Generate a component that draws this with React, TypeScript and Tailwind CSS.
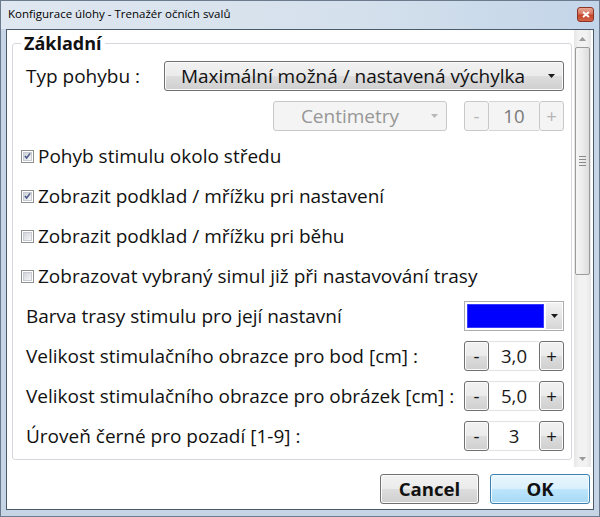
import React from "react";

const btnFace =
  "border border-[#707070] rounded-[3px] bg-[linear-gradient(180deg,#f2f2f2_0%,#ebebeb_49%,#dddddd_50%,#cfcfcf_100%)] shadow-[inset_0_0_0_1px_#fbfbfb]";

function Arrow({ color = "#1a1a1a", dir = "down" }: { color?: string; dir?: "down" | "up" }) {
  return (
    <svg width="7" height="4" viewBox="0 0 7 4">
      {dir === "down" ? (
        <path d="M0 0 H7 L3.5 4 Z" fill={color} />
      ) : (
        <path d="M0 4 H7 L3.5 0 Z" fill={color} />
      )}
    </svg>
  );
}

function CheckBox({ checked }: { checked?: boolean }) {
  return (
    <span className="flex h-[13px] w-[13px] shrink-0 items-center justify-center border border-[#8e8f8f] bg-white">
      <span className="flex h-[9px] w-[9px] items-center justify-center border border-[#c8ccd2] bg-[linear-gradient(135deg,#cfd3d9,#f6f6f7)]">
        {checked && (
          <svg width="8" height="8" viewBox="0 0 8 8" className="-mt-px">
            <path d="M1 4 L3 6.2 L7 1" fill="none" stroke="#4a5b8c" strokeWidth="1.8" />
          </svg>
        )}
      </span>
    </span>
  );
}

function Spinner({ value, disabled }: { value: string; disabled?: boolean }) {
  const side = disabled
    ? "border border-[#c5c9cc] rounded-[3px] bg-[#f4f4f4] text-[#b5b5b5]"
    : btnFace + " text-[#1a1a1a]";
  return (
    <div className="flex h-[30px] w-[100px] shrink-0 text-[18.6px]">
      <div className={"flex w-[25px] items-center justify-center " + side}>-</div>
      <div
        className={
          "flex w-[50px] items-center justify-center border-y " +
          (disabled
            ? "border-[#d6d6d6] bg-[#f4f4f4] text-[#7a7a7a]"
            : "border-[#e2e2e2] bg-white text-[#1a1a1a]")
        }
      >
        {value}
      </div>
      <div className={"flex w-[25px] items-center justify-center " + side}>+</div>
    </div>
  );
}

function CheckRow({ checked, label }: { checked?: boolean; label: string }) {
  return (
    <div className="flex h-[40px] items-center gap-[4px] pl-[8px]">
      <CheckBox checked={checked} />
      <span>{label}</span>
    </div>
  );
}

function ValueRow({ label, children }: { label: string; children: React.ReactNode }) {
  return (
    <div className="flex h-[40px] items-center justify-between pl-[13px] pr-[7px]">
      <span>{label}</span>
      {children}
    </div>
  );
}

export default function App() {
  return (
    <div className="flex h-[517px] w-[600px] flex-col border border-[#6b7a8c] bg-[#c6d5e6] font-['Open_Sans',sans-serif] text-[19px] leading-[24px] text-[#111]">
      {/* title bar */}
      <div className="flex h-[28px] shrink-0 items-start bg-[linear-gradient(90deg,#dfe7f0_0%,#d4e0ec_60%,#c3d5e9_100%)] pl-[7px] pr-[5px]">
        <span className="mt-[5px] text-[11.5px] leading-[16px] text-black">
          Konfigurace úlohy - Trenažér očních svalů
        </span>
        <div className="ml-auto mt-[6px] flex h-[15px] w-[17px] items-center justify-center rounded-[3px] border border-[#8a3526] bg-[linear-gradient(180deg,#e8a795_0%,#d7745e_45%,#c2442b_55%,#d2664a_100%)]">
          <svg width="8" height="7" viewBox="0 0 8 7">
            <path d="M1 1 L7 6 M7 1 L1 6" stroke="#fff" strokeWidth="2" />
          </svg>
        </div>
      </div>

      {/* client area */}
      <div className="mx-[5px] mb-[6px] flex flex-1 flex-col border border-[#4b5a6b] bg-white">
        <div className="flex h-[437px] shrink-0">
          <div className="flex-1 pl-[5px] pr-[2px] pt-[1px]">
            <fieldset className="rounded-[3px] border border-[#d5d9de] pb-[3px]">
              <legend className="ml-[8px] px-[3px] text-[18px] font-bold leading-[24px]">Základní</legend>

              <div className="flex h-[41px] items-center justify-between pl-[13px] pr-[7px]">
                <span>Typ pohybu :</span>
                <div className={"flex h-[30px] w-[400px] items-center " + btnFace}>
                  <span className="flex-1 pl-[2px] text-center">
                    Maximální možná / nastavená výchylka
                  </span>
                  <span className="flex w-[24px] justify-center">
                    <Arrow />
                  </span>
                </div>
              </div>

              <div className="flex h-[40px] items-center justify-end gap-[17px] pr-[7px]">
                <div className="flex h-[30px] w-[174px] items-center rounded-[3px] border border-[#c5c9cc] bg-[#f4f4f4] text-[#979797]">
                  <span className="flex-1 pl-[4px] text-center">Centimetry</span>
                  <span className="flex w-[24px] justify-center">
                    <Arrow color="#b8b8b8" />
                  </span>
                </div>
                <Spinner value="10" disabled />
              </div>

              <CheckRow checked label="Pohyb stimulu okolo středu" />
              <CheckRow checked label="Zobrazit podklad / mřížku pri nastavení" />
              <CheckRow label="Zobrazit podklad / mřížku pri běhu" />
              <CheckRow label="Zobrazovat vybraný simul již při nastavování trasy" />

              <ValueRow label="Barva trasy stimulu pro její nastavní">
                <div className="flex h-[30px] w-[100px] items-stretch border border-[#acacac] bg-white p-px">
                  <div className="m-px flex-1 border border-[#3a3aff] bg-[#0000ff]" />
                  <div className="ml-px flex w-[16px] items-center justify-center bg-[linear-gradient(180deg,#f2f2f2,#d6d6d6)]">
                    <Arrow />
                  </div>
                </div>
              </ValueRow>
              <ValueRow label="Velikost stimulačního obrazce pro bod [cm] :">
                <Spinner value="3,0" />
              </ValueRow>
              <ValueRow label="Velikost stimulačního obrazce pro obrázek [cm] :">
                <Spinner value="5,0" />
              </ValueRow>
              <ValueRow label="Úroveň černé pro pozadí [1-9] :">
                <Spinner value="3" />
              </ValueRow>
            </fieldset>
          </div>

          {/* scrollbar */}
          <div className="mr-[2px] flex w-[17px] flex-col bg-[linear-gradient(90deg,#e6e6e6,#f2f2f2_30%,#f2f2f2_70%,#e6e6e6)]">
            <div className="flex h-[17px] items-center justify-center">
              <Arrow color="#9a9a9a" dir="up" />
            </div>
            <div className="mx-px flex h-[228px] flex-col items-center justify-center gap-[2px] rounded-[2px] border border-[#9b9b9b] bg-[linear-gradient(90deg,#f6f6f6,#ececec_50%,#dcdcdc)]">
              <span className="h-px w-[7px] bg-[#8a8a8a]" />
              <span className="h-px w-[7px] bg-[#8a8a8a]" />
              <span className="h-px w-[7px] bg-[#8a8a8a]" />
              <span className="h-px w-[7px] bg-[#8a8a8a]" />
            </div>
            <div className="flex-1" />
            <div className="flex h-[17px] items-center justify-center">
              <Arrow color="#9a9a9a" />
            </div>
          </div>
        </div>

        {/* bottom buttons */}
        <div className="flex flex-1 items-start justify-end gap-[11px] pr-[3px] pt-[7px] text-[18.6px]">
          <button className={"h-[30px] w-[99px] font-bold " + btnFace}>Cancel</button>
          <button className="h-[30px] w-[100px] rounded-[3px] border border-[#3c7fb1] bg-[linear-gradient(180deg,#eaf6fd_0%,#d9f0fc_49%,#bee6fd_50%,#a7d9f5_100%)] font-bold shadow-[inset_0_0_0_1px_#f3fbff]">
            OK
          </button>
        </div>
      </div>
    </div>
  );
}
